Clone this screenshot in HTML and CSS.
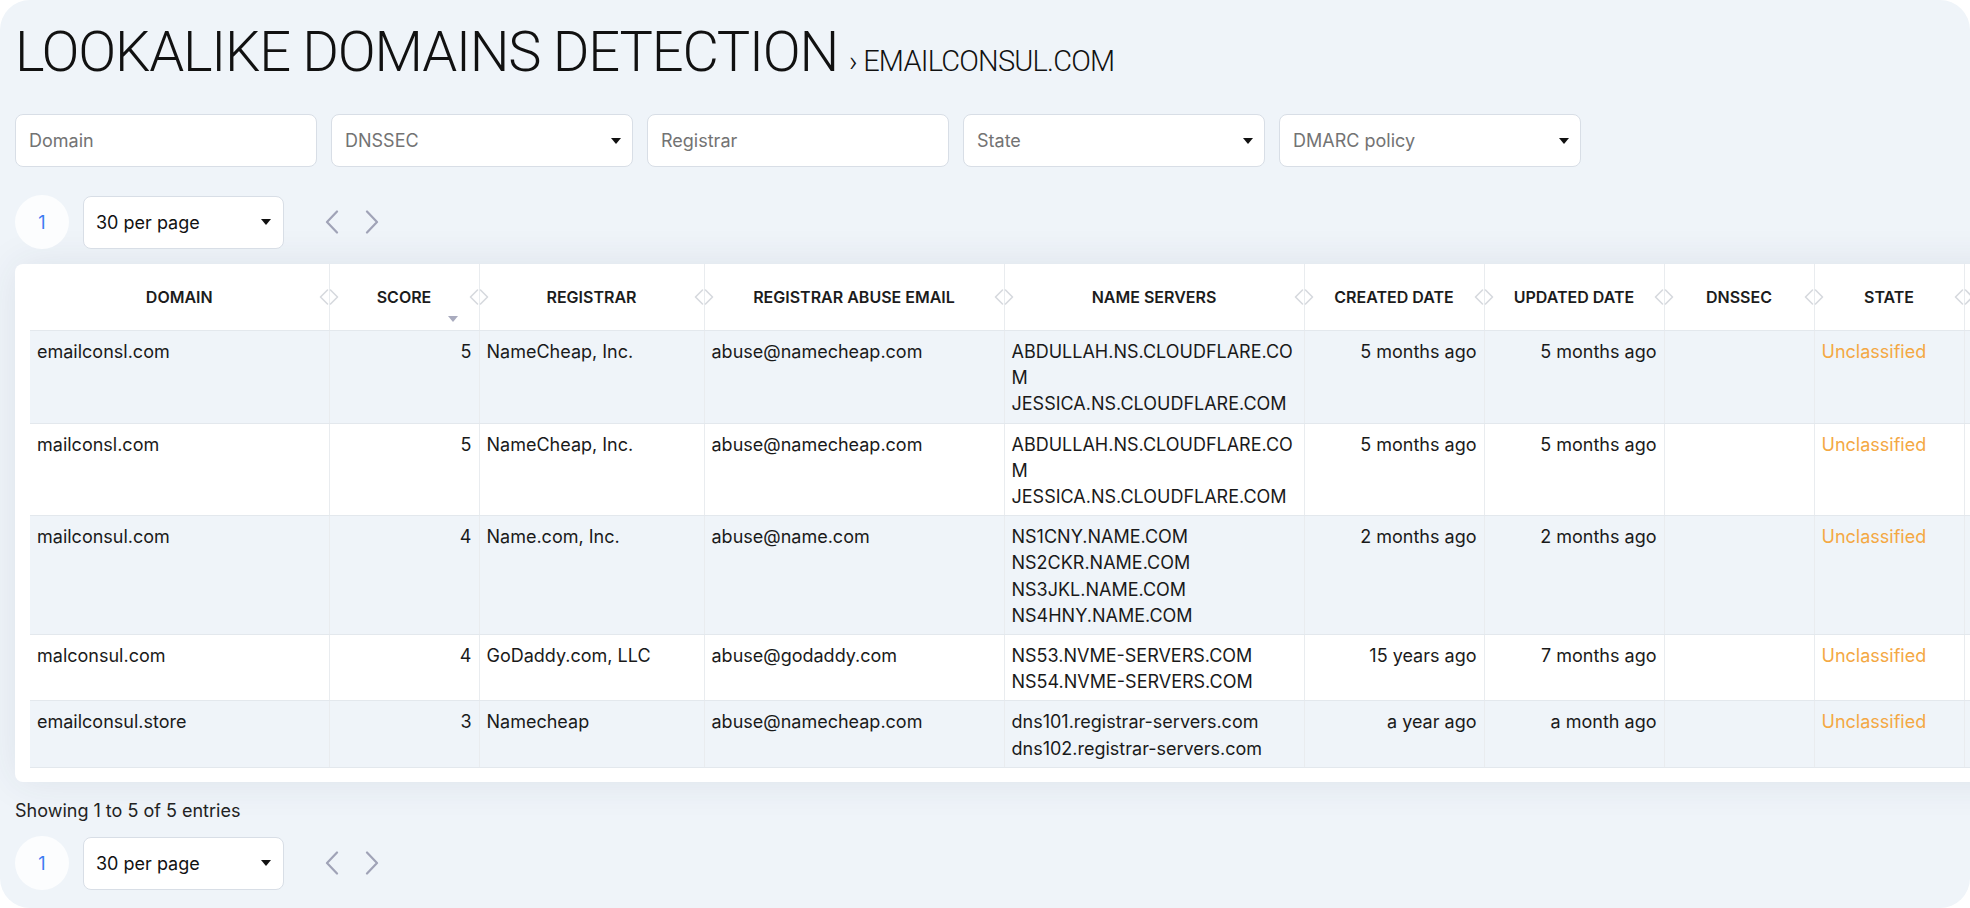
FILE: index.html
```html
<!DOCTYPE html>
<html lang="en">
<head>
<meta charset="utf-8">
<title>Lookalike Domains Detection</title>
<link rel="stylesheet" href="styles.css">
</head>
<body>
<div class="panel">
  <div class="title-row">
    <h1 class="title">LOOKALIKE DOMAINS DETECTION</h1>
    <span class="crumb">› EMAILCONSUL.COM</span>
  </div>

  <div class="filters">
    <input class="field" type="text" placeholder="Domain">
    <div class="field select"><span>DNSSEC</span><i class="caret"></i></div>
    <input class="field" type="text" placeholder="Registrar">
    <div class="field select"><span>State</span><i class="caret"></i></div>
    <div class="field select"><span>DMARC policy</span><i class="caret"></i></div>
  </div>

  <div class="pager">
    <div class="page-num">1</div>
    <div class="per-page"><span>30 per page</span><i class="caret"></i></div>
    <button class="nav nav-first" type="button" aria-label="Previous"><svg width="14" height="24" viewBox="0 0 14 24"><path d="M12 1.5 L2 12 L12 22.5"/></svg></button>
    <button class="nav" type="button" aria-label="Next"><svg width="14" height="24" viewBox="0 0 14 24"><path d="M2 1.5 L12 12 L2 22.5"/></svg></button>
  </div>

  <div class="card">
    <table class="grid">
      <colgroup>
        <col class="c-domain"><col class="c-score"><col class="c-registrar"><col class="c-abuse"><col class="c-ns"><col class="c-date"><col class="c-date"><col class="c-dnssec"><col class="c-state"><col class="c-dmarc">
      </colgroup>
      <thead>
        <tr>
          <th>DOMAIN<svg class="rs" width="24" height="16" viewBox="0 0 24 16"><path d="M10.5 1 L3.5 8 L10.5 15 M13.5 1 L20.5 8 L13.5 15"/></svg></th>
          <th>SCORE<i class="sort-desc"></i><svg class="rs" width="24" height="16" viewBox="0 0 24 16"><path d="M10.5 1 L3.5 8 L10.5 15 M13.5 1 L20.5 8 L13.5 15"/></svg></th>
          <th>REGISTRAR<svg class="rs" width="24" height="16" viewBox="0 0 24 16"><path d="M10.5 1 L3.5 8 L10.5 15 M13.5 1 L20.5 8 L13.5 15"/></svg></th>
          <th>REGISTRAR ABUSE EMAIL<svg class="rs" width="24" height="16" viewBox="0 0 24 16"><path d="M10.5 1 L3.5 8 L10.5 15 M13.5 1 L20.5 8 L13.5 15"/></svg></th>
          <th>NAME SERVERS<svg class="rs" width="24" height="16" viewBox="0 0 24 16"><path d="M10.5 1 L3.5 8 L10.5 15 M13.5 1 L20.5 8 L13.5 15"/></svg></th>
          <th>CREATED DATE<svg class="rs" width="24" height="16" viewBox="0 0 24 16"><path d="M10.5 1 L3.5 8 L10.5 15 M13.5 1 L20.5 8 L13.5 15"/></svg></th>
          <th>UPDATED DATE<svg class="rs" width="24" height="16" viewBox="0 0 24 16"><path d="M10.5 1 L3.5 8 L10.5 15 M13.5 1 L20.5 8 L13.5 15"/></svg></th>
          <th>DNSSEC<svg class="rs" width="24" height="16" viewBox="0 0 24 16"><path d="M10.5 1 L3.5 8 L10.5 15 M13.5 1 L20.5 8 L13.5 15"/></svg></th>
          <th>STATE<svg class="rs" width="24" height="16" viewBox="0 0 24 16"><path d="M10.5 1 L3.5 8 L10.5 15 M13.5 1 L20.5 8 L13.5 15"/></svg></th>
          <th></th>
        </tr>
      </thead>
      <tbody>
        <tr>
          <td>emailconsl.com</td>
          <td class="num">5</td>
          <td>NameCheap, Inc.</td>
          <td>abuse@namecheap.com</td>
          <td class="ns"><div>ABDULLAH.NS.CLOUDFLARE.COM</div><div>JESSICA.NS.CLOUDFLARE.COM</div></td>
          <td class="num">5 months ago</td>
          <td class="num">5 months ago</td>
          <td></td>
          <td class="state">Unclassified</td>
          <td></td>
        </tr>
        <tr>
          <td>mailconsl.com</td>
          <td class="num">5</td>
          <td>NameCheap, Inc.</td>
          <td>abuse@namecheap.com</td>
          <td class="ns"><div>ABDULLAH.NS.CLOUDFLARE.COM</div><div>JESSICA.NS.CLOUDFLARE.COM</div></td>
          <td class="num">5 months ago</td>
          <td class="num">5 months ago</td>
          <td></td>
          <td class="state">Unclassified</td>
          <td></td>
        </tr>
        <tr>
          <td>mailconsul.com</td>
          <td class="num">4</td>
          <td>Name.com, Inc.</td>
          <td>abuse@name.com</td>
          <td class="ns"><div>NS1CNY.NAME.COM</div><div>NS2CKR.NAME.COM</div><div>NS3JKL.NAME.COM</div><div>NS4HNY.NAME.COM</div></td>
          <td class="num">2 months ago</td>
          <td class="num">2 months ago</td>
          <td></td>
          <td class="state">Unclassified</td>
          <td></td>
        </tr>
        <tr>
          <td>malconsul.com</td>
          <td class="num">4</td>
          <td>GoDaddy.com, LLC</td>
          <td>abuse@godaddy.com</td>
          <td class="ns"><div>NS53.NVME-SERVERS.COM</div><div>NS54.NVME-SERVERS.COM</div></td>
          <td class="num">15 years ago</td>
          <td class="num">7 months ago</td>
          <td></td>
          <td class="state">Unclassified</td>
          <td></td>
        </tr>
        <tr>
          <td>emailconsul.store</td>
          <td class="num">3</td>
          <td>Namecheap</td>
          <td>abuse@namecheap.com</td>
          <td class="ns"><div>dns101.registrar-servers.com</div><div>dns102.registrar-servers.com</div></td>
          <td class="num">a year ago</td>
          <td class="num">a month ago</td>
          <td></td>
          <td class="state">Unclassified</td>
          <td></td>
        </tr>
      </tbody>
    </table>
  </div>

  <div class="info">Showing 1 to 5 of 5 entries</div>

  <div class="pager pager-bottom">
    <div class="page-num">1</div>
    <div class="per-page"><span>30 per page</span><i class="caret"></i></div>
    <button class="nav nav-first" type="button" aria-label="Previous"><svg width="14" height="24" viewBox="0 0 14 24"><path d="M12 1.5 L2 12 L12 22.5"/></svg></button>
    <button class="nav" type="button" aria-label="Next"><svg width="14" height="24" viewBox="0 0 14 24"><path d="M2 1.5 L12 12 L2 22.5"/></svg></button>
  </div>
</div>
</body>
</html>
```

FILE: styles.css
```css
html, body {
  margin: 0;
  padding: 0;
  background: #ffffff;
}

body {
  font-family: Inter, "Noto Sans", "Liberation Sans", sans-serif;
  color: #1a1a1a;
}

.panel {
  width: 1970px;
  height: 908px;
  box-sizing: border-box;
  padding: 24px 15px 0;
  background: #eff4f9;
  border-radius: 30px;
  overflow: hidden;
}

/* Title */
.title-row {
  display: flex;
  align-items: baseline;
  height: 56px;
}

.title {
  margin: 0;
  font-family: Roboto, "Liberation Sans", sans-serif;
  font-weight: 300;
  font-size: 56px;
  line-height: 56px;
  letter-spacing: -1.2px;
  color: #111111;
}

.crumb {
  margin-left: 11px;
  font-family: Roboto, "Liberation Sans", sans-serif;
  font-weight: 300;
  font-size: 29px;
  line-height: 1;
  letter-spacing: -0.8px;
  color: #111111;
}

/* Filters */
.filters {
  display: flex;
  gap: 14px;
  margin-top: 34px;
}

.field {
  width: 302px;
  height: 53px;
  box-sizing: border-box;
  margin: 0;
  padding: 0 13px;
  border: 1px solid #d8dee6;
  border-radius: 8px;
  background: #ffffff;
  font-family: Inter, "Noto Sans", sans-serif;
  font-size: 18px;
  color: #737373;
  outline: none;
}

.field::placeholder {
  color: #737373;
  opacity: 1;
}

.select {
  display: flex;
  align-items: center;
  justify-content: space-between;
  padding-right: 11px;
}

.caret {
  display: block;
  width: 0;
  height: 0;
  border-left: 5px solid transparent;
  border-right: 5px solid transparent;
  border-top: 6px solid #111111;
}

/* Pager */
.pager {
  display: flex;
  align-items: center;
  height: 54px;
  margin-top: 28px;
}

.page-num {
  width: 54px;
  height: 54px;
  border-radius: 50%;
  background: #fcfdfe;
  color: #3d7bf2;
  font-size: 18px;
  display: flex;
  align-items: center;
  justify-content: center;
}

.per-page {
  width: 201px;
  height: 53px;
  box-sizing: border-box;
  margin-left: 14px;
  padding: 0 12px 0 12px;
  border: 1px solid #d8dee6;
  border-radius: 8px;
  background: #ffffff;
  font-size: 18px;
  color: #111111;
  display: flex;
  align-items: center;
  justify-content: space-between;
}

.nav {
  width: 40px;
  height: 40px;
  padding: 0;
  border: 0;
  background: none;
  display: flex;
  align-items: center;
  justify-content: center;
}

.nav-first {
  margin-left: 28px;
}

.nav svg path {
  fill: none;
  stroke: #a0a3b7;
  stroke-width: 2.2;
  stroke-linecap: round;
  stroke-linejoin: round;
}

/* Table card */
.card {
  width: 2114px;
  margin-top: 15px;
  padding: 0 15px 14px;
  background: #ffffff;
  border-radius: 8px;
  box-shadow: 0 0 40px rgba(40, 60, 90, 0.09);
}

.grid {
  width: 2114px;
  table-layout: fixed;
  border-collapse: collapse;
  font-size: 18px;
}

.c-domain { width: 299px; }
.c-score { width: 150px; }
.c-registrar { width: 225px; }
.c-abuse { width: 300px; }
.c-ns { width: 300px; }
.c-date { width: 180px; }
.c-dnssec { width: 150px; }
.c-state { width: 150px; }
.c-dmarc { width: 180px; }

.grid th {
  position: relative;
  height: 66px;
  padding: 0 7px;
  font-size: 16px;
  font-weight: 600;
  color: #1c1c1c;
  text-align: center;
  vertical-align: middle;
  white-space: nowrap;
  border-right: 1px solid #e9ecef;
  border-bottom: 1px solid #e3e8ed;
}

.rs {
  position: absolute;
  right: -12px;
  top: 50%;
  margin-top: -8px;
  z-index: 1;
}

.rs path {
  fill: none;
  stroke: #d6d9de;
  stroke-width: 1.6;
  stroke-linecap: round;
  stroke-linejoin: round;
}

.sort-desc {
  position: absolute;
  right: 21px;
  bottom: 8px;
  width: 0;
  height: 0;
  border-left: 5px solid transparent;
  border-right: 5px solid transparent;
  border-top: 6px solid #a9abbe;
}

.grid td {
  padding: 8px 7px 5px;
  line-height: 26.2px;
  vertical-align: top;
  color: #1a1a1a;
  border-right: 1px solid #e9ecef;
  border-bottom: 1px solid #e3e8ed;
}

.grid tbody tr:nth-child(odd) td {
  background: #eff4f9;
}

.grid tbody tr:nth-child(even) td {
  background: #ffffff;
}

.grid td.num {
  text-align: right;
}

.grid td.ns {
  word-break: break-all;
}

.grid td.state {
  color: #f4a843;
}

/* Footer */
.info {
  margin-top: 16px;
  font-size: 18px;
  line-height: 26.5px;
  color: #222222;
}

.pager-bottom {
  margin-top: 12px;
}
```
